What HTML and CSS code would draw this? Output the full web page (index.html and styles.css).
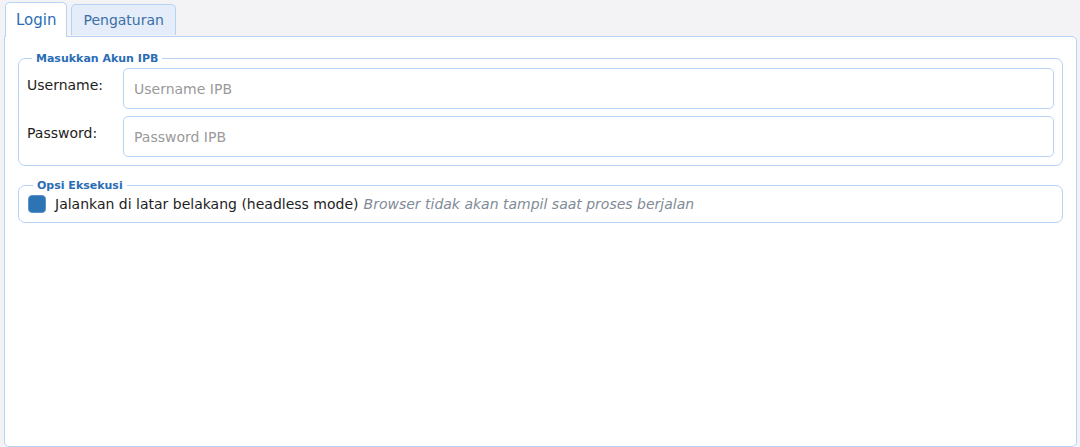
FILE: index.html
```html
<!DOCTYPE html>
<html lang="id">
<head>
<meta charset="utf-8">
<title>Login</title>
<link rel="stylesheet" href="styles.css">
</head>
<body>
<div class="tabs">
  <div class="tab active">Login</div>
  <div class="tab">Pengaturan</div>
</div>
<div class="panel">
  <fieldset class="group">
    <legend>Masukkan Akun IPB</legend>
    <div class="row">
      <label class="label" for="user">Username:</label>
      <input class="field" id="user" type="text" placeholder="Username IPB">
    </div>
    <div class="row">
      <label class="label" for="pass">Password:</label>
      <input class="field" id="pass" type="password" placeholder="Password IPB">
    </div>
  </fieldset>
  <fieldset class="group options">
    <legend>Opsi Eksekusi</legend>
    <label class="check">
      <input class="box" type="checkbox" checked>
      <span class="check-text">Jalankan di latar belakang (headless mode)</span>
      <span class="hint">Browser tidak akan tampil saat proses berjalan</span>
    </label>
  </fieldset>
</div>
</body>
</html>
```

FILE: styles.css
```css
html, body {
  margin: 0;
  height: 100%;
}
body {
  background: #f3f3f5;
  font-family: "DejaVu Sans", Verdana, sans-serif;
  font-size: 14px;
  color: #1e1e1e;
  display: flex;
  flex-direction: column;
}
.tabs {
  display: flex;
  align-items: flex-end;
  gap: 4px;
  padding: 2px 0 0 5px;
  height: 34px;
  position: relative;
  z-index: 1;
}
.tab {
  box-sizing: border-box;
  height: 31px;
  padding: 0 11px;
  display: flex;
  align-items: center;
  background: #e4edf9;
  border: 1px solid #b6d3f5;
  border-bottom: none;
  border-radius: 5px 5px 0 0;
  color: #3b6fa5;
  margin-bottom: 1px;
}
.tab.active {
  height: 35px;
  margin-bottom: -1px;
  background: #fff;
  color: #2a6db5;
  padding: 0 10px;
  font-size: 15px;
}
.panel {
  flex: 1;
  margin: 0 3px 0 4px;
  background: #fff;
  border: 1px solid #b6d3f5;
  border-radius: 0 5px 5px 5px;
  padding: 15px 13px;
  display: flex;
  flex-direction: column;
  gap: 13px;
}
.group {
  margin: 0;
  border: 1px solid #b6d3f5;
  border-radius: 7px;
  padding: 3px 8px 8px 8px;
}
.group legend {
  font-size: 11px;
  font-weight: bold;
  color: #2a6db5;
  padding: 0 4px;
  margin-left: 5px;
}
.row {
  display: flex;
  align-items: flex-start;
}
.row + .row {
  margin-top: 7px;
}
.label {
  width: 96px;
  padding-top: 9px;
}
.field {
  flex: 1;
  box-sizing: border-box;
  height: 41px;
  margin: 0;
  border: 1px solid #b6d3f5;
  border-radius: 5px;
  padding: 0 10px;
  font-family: inherit;
  font-size: 14px;
  color: #222;
  outline: none;
}
.field::placeholder {
  color: #9a9a9a;
}
.options {
  padding: 3px 8px 9px 9px;
}
.check {
  display: flex;
  align-items: center;
}
.box {
  appearance: none;
  -webkit-appearance: none;
  box-sizing: border-box;
  width: 18px;
  height: 18px;
  margin: 0 9px 0 0;
  border-radius: 4px;
  background: #2e74b5;
  border: 1px solid #5a93cb;
}
.check-text {
  color: #1e1e1e;
}
.hint {
  margin-left: 5px;
  font-style: italic;
  color: #7f8b97;
}
```
